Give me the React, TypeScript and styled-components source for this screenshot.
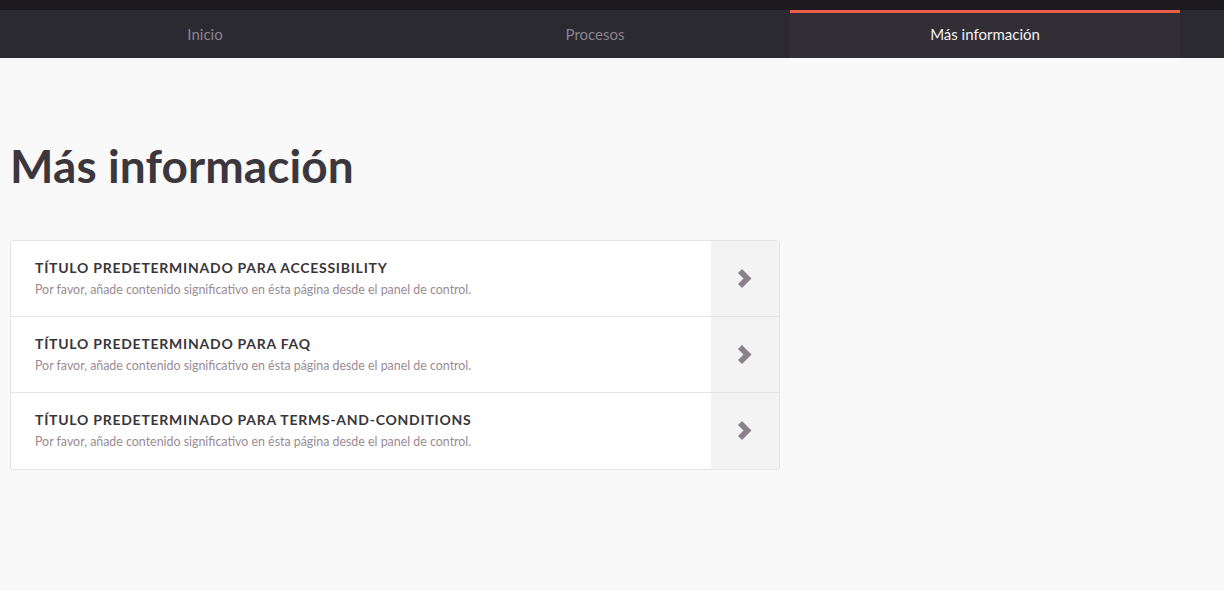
import React from "react";
import styled, { createGlobalStyle } from "styled-components";

const Global = createGlobalStyle`
  html, body { margin: 0; padding: 0; background: #f9f9f9; }
  body { font-family: "Source Sans Pro", Lato, "Noto Sans", sans-serif; }
  * { box-sizing: border-box; }
`;

const TopStrip = styled.div`
  height: 10px;
  background: #1c1a1f;
`;

const NavBar = styled.nav`
  height: 48px;
  background: #2c2a31;
  display: flex;
  padding-left: 10px;
`;

const Tab = styled.a<{ $active?: boolean }>`
  width: 390px;
  display: flex;
  align-items: center;
  justify-content: center;
  font-size: 15px;
  text-decoration: none;
  color: ${(p) => (p.$active ? "#f4f1f4" : "#8a8590")};
  background: ${(p) => (p.$active ? "#312e35" : "transparent")};
  border-top: 3px solid ${(p) => (p.$active ? "#ea5f4a" : "transparent")};
  padding-bottom: 3px;
`;

const Main = styled.main`
  padding: 78px 10px 0;
`;

const Heading = styled.h1`
  margin: 0 0 44px;
  font-size: 46px;
  line-height: 60px;
  font-weight: 700;
  color: #3b373d;
  letter-spacing: 0.1px;
`;

const List = styled.div`
  width: 770px;
  border: 1px solid #e4e4e4;
  border-radius: 3px;
  background: #fff;
  overflow: hidden;
`;

const Row = styled.a`
  display: flex;
  box-sizing: content-box;
  height: 75px;
  text-decoration: none;
  & + & {
    border-top: 1px solid #e4e4e4;
  }
  &:last-child {
    height: 76px;
  }
`;

const Body = styled.div`
  flex: 1;
  padding: 17px 24px 0;
`;

const Title = styled.div`
  font-size: 14px;
  font-weight: 700;
  letter-spacing: 0.75px;
  color: #3a3538;
  line-height: 20px;
`;

const Sub = styled.div`
  font-size: 12.4px;
  color: #9a8a94;
  line-height: 18px;
  margin-top: 3px;
`;

const Arrow = styled.div`
  width: 68px;
  background: #f3f3f3;
  display: flex;
  align-items: center;
  justify-content: center;
  padding-bottom: 1px;
`;

const Chevron = () => (
  <svg width="14" height="19" viewBox="0 0 14 19">
    <path d="M0 4 L4 0 L13.5 9.5 L4 19 L0 15 L5.5 9.5 Z" fill="#8b8189" />
  </svg>
);

const items = ["ACCESSIBILITY", "FAQ", "TERMS-AND-CONDITIONS"];

export default function App() {
  return (
    <>
      <Global />
      <TopStrip />
      <NavBar>
        <Tab>Inicio</Tab>
        <Tab>Procesos</Tab>
        <Tab $active>Más información</Tab>
      </NavBar>
      <Main>
        <Heading>Más información</Heading>
        <List>
          {items.map((it) => (
            <Row key={it}>
              <Body>
                <Title>TÍTULO PREDETERMINADO PARA {it}</Title>
                <Sub>Por favor, añade contenido significativo en ésta página desde el panel de control.</Sub>
              </Body>
              <Arrow>
                <Chevron />
              </Arrow>
            </Row>
          ))}
        </List>
      </Main>
    </>
  );
}
